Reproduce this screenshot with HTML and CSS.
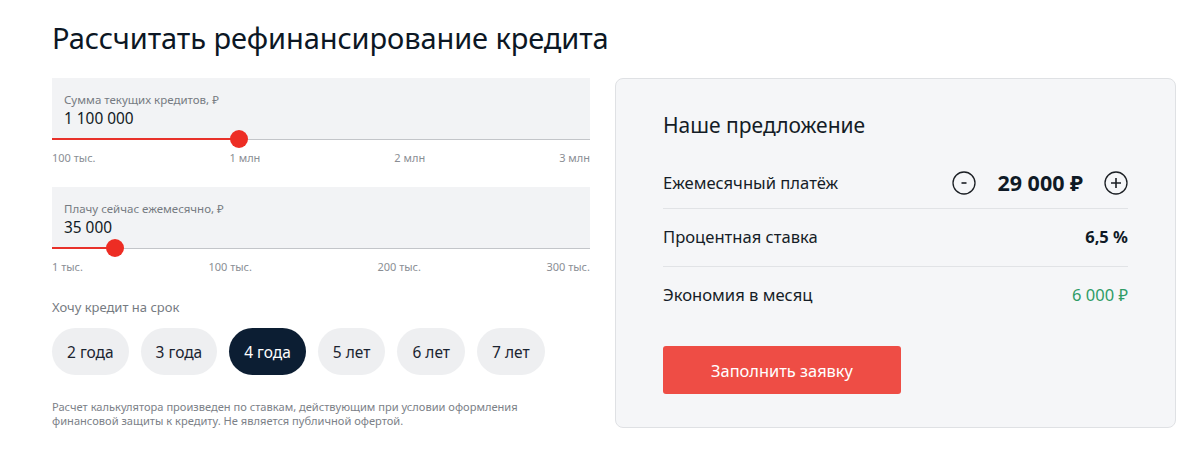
FILE: index.html
```html
<!DOCTYPE html>
<html lang="ru">
<head>
<meta charset="utf-8">
<title>Рефинансирование</title>
<link rel="stylesheet" href="styles.css">
</head>
<body>
<div class="page">
  <h1 class="title">Рассчитать рефинансирование кредита</h1>
  <div class="layout">
    <div class="calc">
      <div class="slider">
        <div class="field">
          <div class="field-label">Сумма текущих кредитов, ₽</div>
          <div class="field-value">1 100 000</div>
        </div>
        <div class="track">
          <div class="fill" style="width:187px"></div>
          <div class="thumb" style="left:187px"></div>
        </div>
        <div class="ticks"><span>100 тыс.</span><span>1 млн</span><span>2 млн</span><span>3 млн</span></div>
      </div>
      <div class="slider">
        <div class="field">
          <div class="field-label">Плачу сейчас ежемесячно, ₽</div>
          <div class="field-value">35 000</div>
        </div>
        <div class="track">
          <div class="fill" style="width:63px"></div>
          <div class="thumb" style="left:63px"></div>
        </div>
        <div class="ticks"><span>1 тыс.</span><span>100 тыс.</span><span>200 тыс.</span><span>300 тыс.</span></div>
      </div>
      <div class="term-label">Хочу кредит на срок</div>
      <div class="pills">
        <button class="pill">2 года</button>
        <button class="pill">3 года</button>
        <button class="pill pill-active">4 года</button>
        <button class="pill">5 лет</button>
        <button class="pill">6 лет</button>
        <button class="pill">7 лет</button>
      </div>
      <p class="note">Расчет калькулятора произведен по ставкам, действующим при условии оформления финансовой защиты к кредиту. Не является публичной офертой.</p>
    </div>
    <div class="offer">
      <h2 class="offer-title">Наше предложение</h2>
      <div class="row row-first">
        <span class="row-label">Ежемесячный платёж</span>
        <div class="stepper">
          <span class="step-btn"><svg width="24" height="24" viewBox="0 0 24 24"><circle cx="12" cy="12" r="11" fill="none" stroke="#1b1f24" stroke-width="1.3"/><path d="M9.5 12h5" stroke="#1b1f24" stroke-width="1.6"/></svg></span>
          <span class="row-value big">29 000 ₽</span>
          <span class="step-btn"><svg width="24" height="24" viewBox="0 0 24 24"><circle cx="12" cy="12" r="11" fill="none" stroke="#1b1f24" stroke-width="1.3"/><path d="M7 12h10M12 7v10" stroke="#1b1f24" stroke-width="1.6"/></svg></span>
        </div>
      </div>
      <div class="row">
        <span class="row-label">Процентная ставка</span>
        <span class="row-value">6,5 %</span>
      </div>
      <div class="row row-last">
        <span class="row-label">Экономия в месяц</span>
        <span class="row-value green">6 000 ₽</span>
      </div>
      <button class="apply">Заполнить заявку</button>
    </div>
  </div>
</div>
</body>
</html>
```
FILE: styles.css
```css
* { box-sizing: border-box; }
body {
  margin: 0;
  background: #fff;
  font-family: "Noto Sans", "Open Sans", sans-serif;
  color: #0f1a26;
}
.page {
  padding: 19px 24px 0 52px;
}
.title {
  margin: 0 0 21px;
  font-size: 29px;
  font-weight: 400;
  line-height: 38px;
  color: #0c1724;
  letter-spacing: -0.1px;
}
.layout {
  display: grid;
  grid-template-columns: 538px 561px;
  column-gap: 25px;
  align-items: start;
}
.slider { margin-bottom: 22px; }
.field {
  background: #f2f3f5;
  height: 61px;
  padding: 14px 12px 0;
}
.field-label {
  font-size: 11.5px;
  line-height: 16px;
  color: #767b82;
}
.field-value {
  font-size: 15.4px;
  line-height: 20px;
  margin-top: 1px;
  color: #111a24;
}
.track {
  position: relative;
  height: 1px;
  background: #c3c5c9;
}
.fill {
  position: absolute;
  left: 0;
  top: -1px;
  height: 2px;
  background: #e8312a;
}
.thumb {
  position: absolute;
  top: -9px;
  width: 18px;
  height: 18px;
  margin-left: -9px;
  border-radius: 50%;
  background: #ed2d24;
}
.ticks {
  display: flex;
  justify-content: space-between;
  font-size: 11px;
  line-height: 14px;
  color: #8a8e94;
  margin-top: 11px;
}
.term-label {
  font-size: 13px;
  line-height: 18px;
  color: #767b82;
  margin-top: 24px;
}
.pills {
  display: flex;
  gap: 12px;
  margin-top: 12px;
}
.pill {
  border: 0;
  height: 47px;
  padding: 0 15px;
  border-radius: 24px;
  background: #eeeff1;
  font-family: inherit;
  font-size: 15.5px;
  color: #1b2430;
  min-width: 66px;
}
.pill-active {
  background: #0c1e33;
  color: #fff;
}
.note {
  margin: 25px 0 0;
  font-size: 11.1px;
  line-height: 14px;
  color: #7c8188;
  max-width: 490px;
}
.offer {
  background: #f5f6f8;
  border: 1px solid #dfe1e4;
  border-radius: 8px;
  padding: 31px 47px 32px;
  height: 350px;
}
.offer-title {
  margin: 0 0 19px;
  font-size: 21px;
  font-weight: 400;
  line-height: 30px;
  color: #141c26;
}
.row {
  display: flex;
  align-items: center;
  justify-content: space-between;
  border-bottom: 1px solid #e1e3e6;
  padding: 17px 0 18px;
  font-size: 16.6px;
  line-height: 22px;
}
.row-first { padding: 12px 0 13px; }
.row-last { border-bottom: 0; padding-bottom: 40px; }
.row-label { color: #151d27; }
.row-value { font-weight: 700; font-size: 16.5px; color: #0f1a26; }
.row-value.big { font-size: 21.5px; line-height: 24px; }
.row-value.green { font-weight: 400; color: #2f9c66; }
.stepper {
  display: flex;
  align-items: center;
  gap: 21px;
}
.step-btn { display: flex; }
.apply {
  display: block;
  width: 238px;
  height: 48px;
  border: 0;
  border-radius: 3px;
  background: #ee4d45;
  color: #fff;
  font-family: inherit;
  font-size: 16.4px;
}
```
